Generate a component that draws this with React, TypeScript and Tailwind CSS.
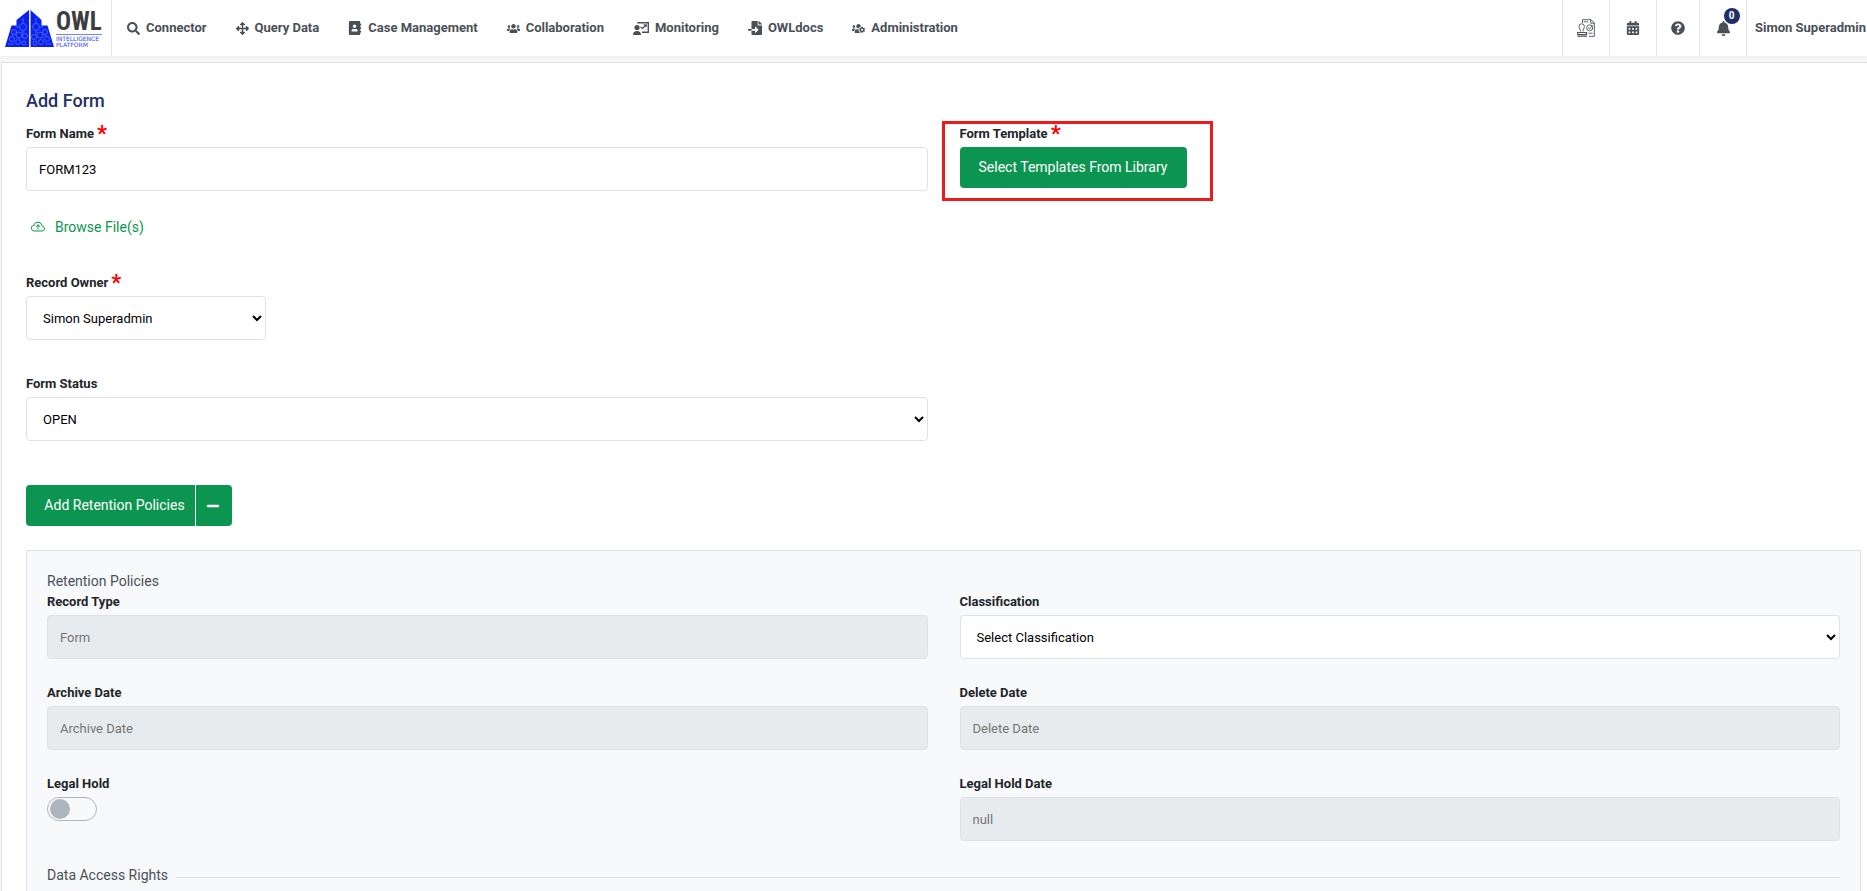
import type { ReactNode } from "react";
import {
  FaSearch,
  FaArrowsAlt,
  FaAddressBook,
  FaUsers,
  FaFileImport,
  FaUsersCog,
  FaCalendarAlt,
  FaQuestionCircle,
  FaBell,
  FaMinus,
} from "react-icons/fa";
import { BsCloudArrowUp } from "react-icons/bs";

function Logo() {
  return (
    <a href="#" aria-label="OWL Intelligence Platform" className="flex h-full w-28 shrink-0 items-center gap-[2px] border-r border-[#e4e6ea] pl-[5px]">
      <svg viewBox="0 0 49 37" className="h-[37px] w-[49px] shrink-0">
        <g fill="#0a22f0">
          <path d="M0 37 6.5 15.500H11.500V10L24 0V37Z" />
          <path d="M49 37 42.500 15.500H36.500V10L25.500 0V37Z" />
        </g>
        <g fill="none" stroke="#6f86f8" strokeWidth="0.6">
          <circle cx="18" cy="17" r="3.500" />
          <circle cx="9" cy="22" r="2.500" />
          <circle cx="14" cy="25" r="3" />
          <circle cx="20" cy="26" r="2.500" />
          <circle cx="7" cy="29" r="2.500" />
          <circle cx="13" cy="32" r="2.500" />
          <circle cx="19" cy="33" r="2" />
          <path d="M18 13.500V8M14.500 17H11M18 20.500V23.500M9 24.500 7 26.500M3 34h6" />
          <circle cx="31" cy="17" r="3.500" />
          <circle cx="40" cy="22" r="2.500" />
          <circle cx="35" cy="25" r="3" />
          <circle cx="29" cy="27" r="2.500" />
          <circle cx="42" cy="29" r="2.500" />
          <circle cx="36" cy="32" r="2.500" />
          <circle cx="30" cy="33" r="2" />
          <path d="M31 13.500V8M34.500 17H38M31 20.500V24.500M40 24.500 42 26.500M46 34h-6" />
        </g>
        <path d="M24.700 0V37" stroke="#dfe4ff" strokeWidth="1" />
      </svg>
      <span className="flex flex-col">
        <span className="text-[25px] leading-[25px] font-bold text-[#3d3d3f] [font-family:'Roboto_Condensed','Liberation_Sans_Narrow','Roboto',sans-serif]">OWL</span>
        <span className="border-t border-[#6f86f8] pt-px text-[6px] leading-[6px] text-[#2c45f2] [font-family:'DejaVu_Sans',sans-serif]">
          INTELLIGENCE
          <br />
          PLATFORM
        </span>
      </span>
    </a>
  );
}

function MonitoringIcon() {
  return (
    <svg viewBox="0 0 16 13" className="h-[13px] w-4" fill="none">
      <path d="M5 1.500V.7H15.300V10.300H9" stroke="currentColor" strokeWidth="1.400" />
      <path d="M7.500 5 9.500 6.500 13 3M10.800 2.800H13.200V5" stroke="currentColor" strokeWidth="1.200" />
      <circle cx="4" cy="5.500" r="2.600" fill="currentColor" />
      <path d="M0 13C0 10.500 1.500 9 4 9S8 10.500 8 13Z" fill="currentColor" />
    </svg>
  );
}

function ApprovalIcon() {
  return (
    <svg viewBox="0 0 18 18" className="h-[18px] w-[18px]" fill="none" stroke="currentColor" strokeWidth="0.9">
      <path d="M5.500 4V.7H14L17.300 4V17.300H12" />
      <path d="M13.700.7V4.200H17.300M7 2.800h4" />
      <circle cx="12.700" cy="8.800" r="3" />
      <path d="M11.200 8.800 12.500 10 15.500 6.500" />
      <path d="M3.500 12.500C3.800 10.500 2 9.500 2 7.500a2.700 2.700 0 0 1 5.400 0C7.400 9.500 5.600 10.500 6 12.500" />
      <path d="M.7 15.500V13.500H9.500V15.500ZM.5 17.200H10" strokeWidth="1.200" />
      <path d="M11.500 14.200h4" />
    </svg>
  );
}

const navItems: { label: string; icon: ReactNode }[] = [
  { label: "Connector", icon: <FaSearch size={13} /> },
  { label: "Query Data", icon: <FaArrowsAlt size={13} /> },
  { label: "Case Management", icon: <FaAddressBook size={14} /> },
  { label: "Collaboration", icon: <FaUsers size={13} /> },
  { label: "Monitoring", icon: <MonitoringIcon /> },
  { label: "OWLdocs", icon: <FaFileImport size={14} /> },
  { label: "Administration", icon: <FaUsersCog size={13} /> },
];

function Header() {
  const tool = "flex h-full items-center justify-center border-l border-[#e4e6ea]";
  return (
    <header className="flex h-14 items-center overflow-hidden bg-white text-[#495057] shadow-[0_0_6px_rgba(60,40,50,0.08)]">
      <Logo />
      <nav className="flex h-full items-center gap-[29px] pl-[15px]">
        {navItems.map((item) => (
          <a key={item.label} href="#" className="flex items-center gap-[6px] text-[13px] leading-5 font-bold whitespace-nowrap">
            {item.icon}
            {item.label}
          </a>
        ))}
      </nav>
      <div className="ml-auto flex h-full shrink-0 items-center">
        <button type="button" aria-label="Approvals" className={`${tool} w-[47px]`}>
          <ApprovalIcon />
        </button>
        <button type="button" aria-label="Calendar" className={`${tool} w-[47px]`}>
          <FaCalendarAlt size={14} />
        </button>
        <button type="button" aria-label="Help" className={`${tool} w-[43px]`}>
          <FaQuestionCircle size={14} />
        </button>
        <button type="button" aria-label="Notifications" className={`${tool} w-[47px]`}>
          <span className="relative">
            <FaBell size={15} />
            <span className="absolute -top-[13px] left-2 flex size-4 items-center justify-center rounded-full bg-[#1f2f66] text-[10px] leading-none font-bold text-white">0</span>
          </span>
        </button>
        <a href="#" className="flex h-full w-[121px] items-center overflow-hidden border-l border-[#e4e6ea] pl-2 text-[13px] font-bold whitespace-nowrap">
          Simon Superadmin
        </a>
      </div>
    </header>
  );
}

function Label({ htmlFor, children, required }: { htmlFor: string; children: ReactNode; required?: boolean }) {
  return (
    <label htmlFor={htmlFor} className="flex h-[26px] items-center gap-[3px] text-[13px] leading-[26px] font-bold text-[#212529]">
      {children}
      {required && <span className="text-[22px] leading-[26px] text-[#ff0000]">*</span>}
    </label>
  );
}

const control = "block h-11 rounded border border-[#dee2e6] text-[13px]";

function DisabledField({ id, label, value, placeholder }: { id: string; label: string; value?: string; placeholder?: string }) {
  return (
    <div>
      <Label htmlFor={id}>{label}</Label>
      <input id={id} type="text" disabled defaultValue={value} placeholder={placeholder} className={`${control} w-full bg-[#e8ebee] px-3 text-[#757575] placeholder:text-[#757575]`} />
    </div>
  );
}

function SelectField({ id, label, option, required, width }: { id: string; label: string; option: string; required?: boolean; width: string }) {
  return (
    <div>
      <Label htmlFor={id} required={required}>
        {label}
      </Label>
      <select id={id} className={`${control} ${width} bg-white pl-3 text-black`}>
        <option>{option}</option>
      </select>
    </div>
  );
}

export default function App() {
  return (
    <div className="flex min-h-screen flex-col overflow-x-hidden bg-[#f8f7f8] [font-family:'Roboto','Liberation_Sans',sans-serif]">
      <Header />
      <main className="mt-[6px] ml-px flex flex-1 flex-col border-t border-l border-[#dee2e6] bg-white pt-6 pr-[6px] pl-6">
        <h1 className="text-[18px] leading-7 font-medium text-[#203064]">Add Form</h1>

        <div className="mt-[6px] grid grid-cols-2 gap-x-8">
          <div>
            <Label htmlFor="form-name" required>
              Form Name
            </Label>
            <input id="form-name" type="text" defaultValue="FORM123" className={`${control} w-full bg-white px-3 text-black`} />
          </div>
          <div className="relative">
            <div className="pointer-events-none absolute top-0 -left-[18px] h-20 w-[271px] border-[3px] border-[#ec1c1c]" />
            <Label htmlFor="form-template" required>
              Form Template
            </Label>
            <button id="form-template" type="button" className="h-[41px] w-[227px] rounded bg-[#0c9550] text-[14px] text-white">
              Select Templates From Library
            </button>
          </div>
        </div>

        <button type="button" className="mt-[26px] flex h-5 items-center gap-[10px] self-start pl-[5px] text-[14px] text-[#0c9550]">
          <BsCloudArrowUp size={14} />
          Browse File(s)
        </button>

        <div className="mt-[33px]">
          <SelectField id="record-owner" label="Record Owner" option="Simon Superadmin" required width="w-60" />
        </div>

        <div className="mt-[31px] grid grid-cols-2 gap-x-8">
          <SelectField id="form-status" label="Form Status" option="OPEN" width="w-full" />
        </div>

        <div className="mt-11 flex h-[41px] self-start overflow-hidden rounded bg-[#0c9550] text-[14px] text-white">
          <button type="button" className="w-[169px] pl-2">
            Add Retention Policies
          </button>
          <button type="button" aria-label="Collapse retention policies" className="flex w-[37px] items-center justify-center border-l border-white pr-[3px]">
            <FaMinus size={14} />
          </button>
        </div>

        <section className="mt-6 flex-1 border-x border-t border-[#dee2e6] bg-[#f8f9fb] px-5 pt-[22px]">
          <h2 className="text-[14px] leading-4 text-[#495057]">Retention Policies</h2>
          <div className="grid grid-cols-2 gap-x-8 gap-y-[21px]">
            <DisabledField id="record-type" label="Record Type" value="Form" />
            <SelectField id="classification" label="Classification" option="Select Classification" width="w-full" />
            <DisabledField id="archive-date" label="Archive Date" placeholder="Archive Date" />
            <DisabledField id="delete-date" label="Delete Date" placeholder="Delete Date" />
            <div>
              <Label htmlFor="legal-hold">Legal Hold</Label>
              <input
                id="legal-hold"
                type="checkbox"
                role="switch"
                className="flex h-6 w-[50px] appearance-none items-center rounded-full border border-[#adb5bd] bg-[#f8f9fb] px-[2px] before:size-5 before:rounded-full before:bg-[#adb5bd] checked:justify-end"
              />
            </div>
            <DisabledField id="legal-hold-date" label="Legal Hold Date" value="null" />
          </div>
          <div className="mt-6 flex items-center gap-2">
            <h2 className="text-[14px] leading-5 text-[#495057]">Data Access Rights</h2>
            <div className="mt-1 h-px flex-1 bg-[#dee2e6]" />
          </div>
        </section>
      </main>
    </div>
  );
}
